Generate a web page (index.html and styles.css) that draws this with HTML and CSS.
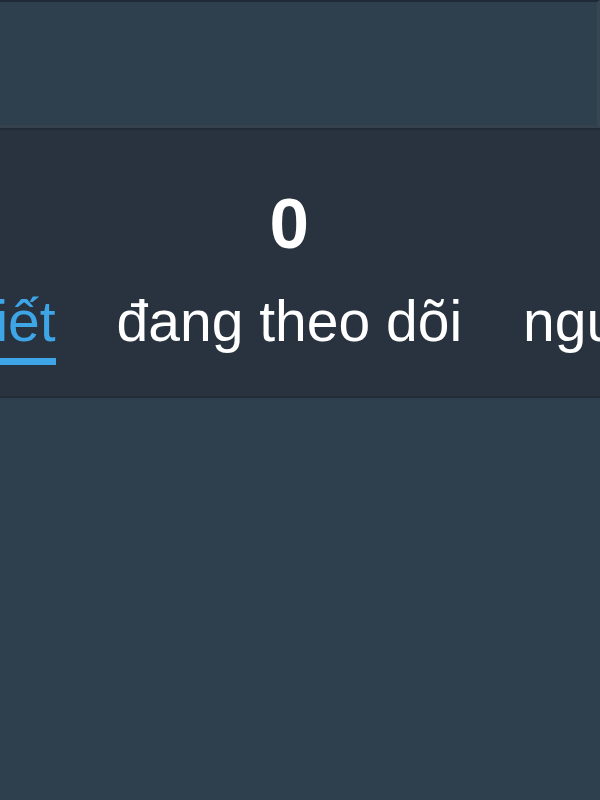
FILE: index.html
```html
<!DOCTYPE html>
<html lang="vi">
<head>
<meta charset="utf-8">
<title>Hồ sơ</title>
<link rel="stylesheet" href="styles.css">
</head>
<body>
  <header class="cover"></header>
  <nav class="stats">
    <div class="stats-row">
      <a class="tab active">
        <span class="num">0</span>
        <span class="label">bài viết</span>
      </a>
      <a class="tab">
        <span class="num">0</span>
        <span class="label">đang theo dõi</span>
      </a>
      <a class="tab">
        <span class="num">0</span>
        <span class="label">người theo dõi</span>
      </a>
    </div>
  </nav>
  <main class="content"></main>
</body>
</html>
```

FILE: styles.css
```css
html, body {
  margin: 0;
  padding: 0;
}
body {
  background: #2e3f4e;
  font-family: "Liberation Sans", Arial, sans-serif;
  width: 600px;
  height: 800px;
  overflow: hidden;
}
.cover {
  height: 123px;
  border-top: 2px solid #1e2a35;
  border-bottom: 3px solid #35424e;
  border-right: 3px solid #384553;
  background: #2e3f4e;
}
.stats {
  background: #28333f;
  border-top: 2px solid #212c36;
  border-bottom: 2px solid #222d38;
  padding: 58px 0 31px;
  overflow: hidden;
}
.stats-row {
  display: flex;
  gap: 61px;
  margin-left: -125px;
  width: max-content;
}
.tab {
  display: flex;
  flex-direction: column;
  align-items: center;
  color: #ffffff;
  text-decoration: none;
}
.num {
  font-size: 71px;
  font-weight: bold;
  line-height: 71px;
  height: 71px;
}
.label {
  margin-top: 34px;
  font-size: 57px;
  line-height: 57px;
  padding-bottom: 8px;
  border-bottom: 7px solid transparent;
  white-space: nowrap;
}
.tab.active .label {
  color: #3ea6e6;
  border-bottom-color: #3ea6e6;
}
.content {
  height: 400px;
}
```
